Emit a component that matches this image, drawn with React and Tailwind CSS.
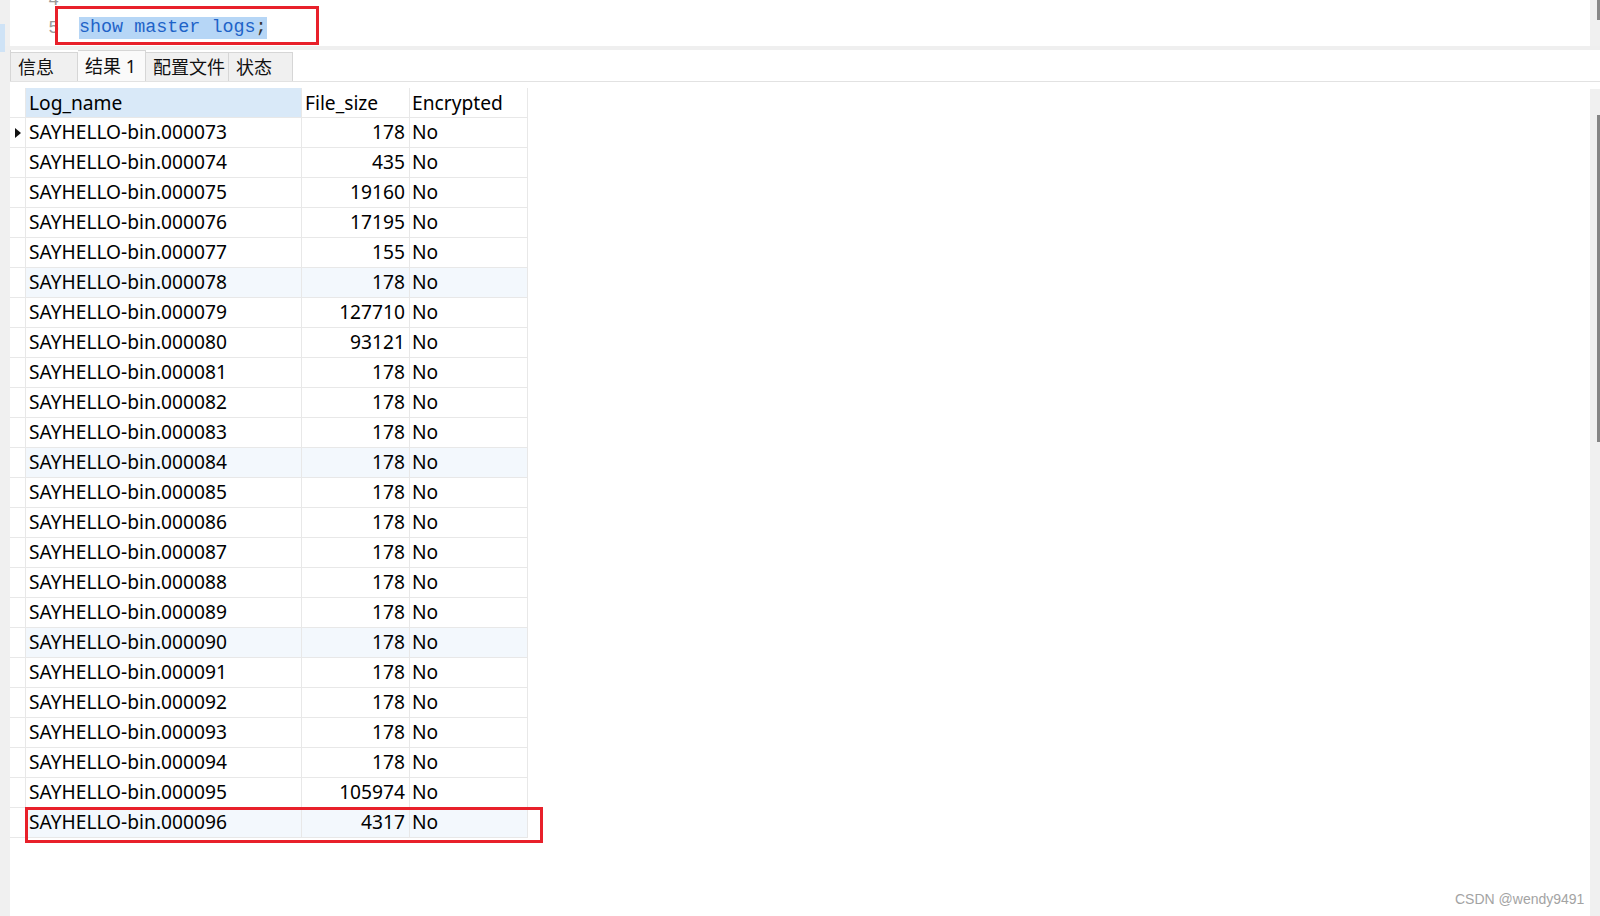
import React from "react";

const rows = [
  ["SAYHELLO-bin.000073", "178"],
  ["SAYHELLO-bin.000074", "435"],
  ["SAYHELLO-bin.000075", "19160"],
  ["SAYHELLO-bin.000076", "17195"],
  ["SAYHELLO-bin.000077", "155"],
  ["SAYHELLO-bin.000078", "178"],
  ["SAYHELLO-bin.000079", "127710"],
  ["SAYHELLO-bin.000080", "93121"],
  ["SAYHELLO-bin.000081", "178"],
  ["SAYHELLO-bin.000082", "178"],
  ["SAYHELLO-bin.000083", "178"],
  ["SAYHELLO-bin.000084", "178"],
  ["SAYHELLO-bin.000085", "178"],
  ["SAYHELLO-bin.000086", "178"],
  ["SAYHELLO-bin.000087", "178"],
  ["SAYHELLO-bin.000088", "178"],
  ["SAYHELLO-bin.000089", "178"],
  ["SAYHELLO-bin.000090", "178"],
  ["SAYHELLO-bin.000091", "178"],
  ["SAYHELLO-bin.000092", "178"],
  ["SAYHELLO-bin.000093", "178"],
  ["SAYHELLO-bin.000094", "178"],
  ["SAYHELLO-bin.000095", "105974"],
  ["SAYHELLO-bin.000096", "4317"],
];

const uiFont = {
  fontFamily: '"Noto Sans", "Noto Sans CJK SC", sans-serif',
};

function Tab({ label, active, width }) {
  return (
    <div
      className={
        "flex items-center pl-[7px] border-t border-r border-[#d6d6d6] text-[18px] text-[#111] whitespace-nowrap " +
        (active ? "h-[31px] bg-[#fafafa]" : "h-[29px] bg-[#f0f0f0]")
      }
      style={{ width }}
    >
      {label}
    </div>
  );
}

export default function App() {
  return (
    <div
      className="relative w-[1600px] h-[916px] overflow-hidden bg-white"
      style={uiFont}
    >
      {/* Editor */}
      <div className="flex h-[46px]">
        <div className="w-[10px] bg-[#f0f0f0]" />
        <div className="flex-1 flex overflow-hidden bg-white">
          <div
            className="w-[49px] h-[46px] flex flex-col justify-end pb-[4px] text-right text-[18px] leading-[28px] text-[#9a9a9a]"
            style={{ fontFamily: '"Liberation Mono", monospace' }}
          >
            <div className="h-[28px] shrink-0">4</div>
            <div className="h-[28px] shrink-0">5</div>
          </div>
          <div
            className="h-[46px] flex flex-col justify-end pb-[4px] pl-[20px] text-[18.4px]"
            style={{ fontFamily: '"Liberation Mono", monospace' }}
          >
            <div className="h-[28px] shrink-0" />
            <div className="h-[28px] shrink-0 flex items-center">
              <span className="inline-block h-[22px] leading-[22px] bg-[#b6d6f6] text-[#1e63c8] whitespace-pre">
                show master logs<span className="text-[#333]">;</span>
              </span>
            </div>
          </div>
        </div>
        <div className="w-[10px] bg-[#f0f0f0] flex justify-end">
          <div className="w-[3px] h-[20px] bg-[#888888]" />
        </div>
      </div>

      {/* Separator band */}
      <div className="h-[4px] bg-[#efefef]" />

      {/* Tabs */}
      <div className="flex h-[32px]">
        <div className="w-[10px] bg-[#f0f0f0]" />
        <div className="flex-1 flex items-end border-b border-[#e2e2e2]">
          <div className="flex items-end border-l border-[#d6d6d6]">
            <Tab label="信息" width={67} />
            <Tab label="结果 1" width={68} active />
            <Tab label="配置文件" width={83} />
            <Tab label="状态" width={64} />
          </div>
        </div>
      </div>

      {/* Results */}
      <div className="flex h-[834px]">
        <div className="w-[10px] bg-[#f0f0f0]" />
        <div className="flex-1 pt-[6px] text-[19.2px] text-black">
          {/* Header */}
          <div className="flex h-[30px] leading-[30px] w-[518px]">
            <div className="w-[16px] border-r border-b border-[#e8e8e8]" />
            <div className="w-[276px] bg-[#d9e9f8] border-r border-b border-[#e8e8e8] pl-[3px]">
              Log_name
            </div>
            <div className="w-[108px] border-r border-b border-[#e8e8e8] pl-[3px]">
              File_size
            </div>
            <div className="w-[118px] border-r border-b border-[#e8e8e8] pl-[2px]">
              Encrypted
            </div>
          </div>
          {rows.map(([name, size], i) => {
            const bg = i % 6 === 5 ? "bg-[#f3f8fd]" : "bg-white";
            return (
              <div key={name} className="flex h-[30px] leading-[28px] w-[518px]">
                <div className="w-[16px] bg-white border-r border-b border-[#e8e8e8] flex items-center justify-center">
                  {i === 0 && (
                    <svg width="6" height="10" viewBox="0 0 6 10">
                      <polygon points="0,0 6,5 0,10" fill="#111" />
                    </svg>
                  )}
                </div>
                <div className={"w-[276px] border-r border-b border-[#e8e8e8] pl-[3px] whitespace-nowrap " + bg}>
                  {name}
                </div>
                <div className={"w-[108px] border-r border-b border-[#e8e8e8] pr-[4px] text-right " + bg}>
                  {size}
                </div>
                <div className={"w-[118px] border-r border-b border-[#e8e8e8] pl-[2px] " + bg}>
                  No
                </div>
              </div>
            );
          })}
        </div>
        <div className="w-[10px] pt-[7px] flex flex-col">
          <div className="flex-1 bg-[#f0f0f0] pt-[26px] flex justify-end items-start">
            <div className="w-[3px] h-[327px] bg-[#858585]" />
          </div>
        </div>
      </div>

      {/* Overlays: gutter marker, annotation boxes, watermark */}
      <div className="absolute left-0 top-[24px] w-[5px] h-[28px] bg-[#cfe3f6]" />
      <div className="absolute left-[55px] top-[6px] w-[264px] h-[39px] border-[3px] border-[#e8202a]" />
      <div className="absolute left-[25px] top-[807px] w-[518px] h-[36px] border-[3px] border-[#e8202a]" />
      <div
        className="absolute left-[1455px] top-[889px] text-[14px] leading-[20px] text-[#a3a3a3] whitespace-nowrap"
        style={{ fontFamily: '"Liberation Sans", Arial, sans-serif' }}
      >
        CSDN @wendy9491
      </div>
    </div>
  );
}
